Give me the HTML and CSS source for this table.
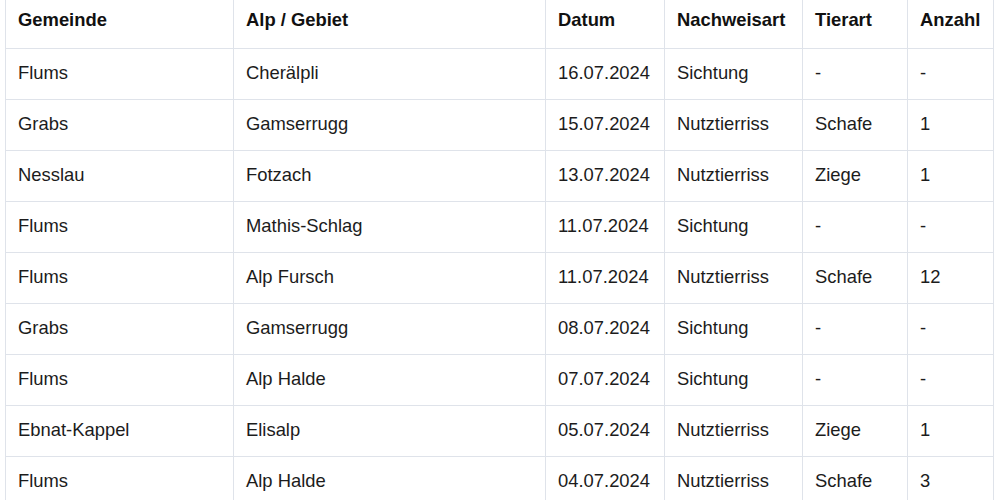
FILE: index.html
```html
<!DOCTYPE html>
<html lang="de">
<head>
<meta charset="utf-8">
<title>Nachweise</title>
<link rel="stylesheet" href="styles.css">
</head>
<body>
<table class="data">
  <colgroup>
    <col class="c1"><col class="c2"><col class="c3"><col class="c4"><col class="c5"><col class="c6">
  </colgroup>
  <thead>
    <tr><th>Gemeinde</th><th>Alp / Gebiet</th><th>Datum</th><th>Nachweisart</th><th>Tierart</th><th>Anzahl</th></tr>
  </thead>
  <tbody>
    <tr><td>Flums</td><td>Cherälpli</td><td>16.07.2024</td><td>Sichtung</td><td>-</td><td>-</td></tr>
    <tr><td>Grabs</td><td>Gamserrugg</td><td>15.07.2024</td><td>Nutztierriss</td><td>Schafe</td><td>1</td></tr>
    <tr><td>Nesslau</td><td>Fotzach</td><td>13.07.2024</td><td>Nutztierriss</td><td>Ziege</td><td>1</td></tr>
    <tr><td>Flums</td><td>Mathis-Schlag</td><td>11.07.2024</td><td>Sichtung</td><td>-</td><td>-</td></tr>
    <tr><td>Flums</td><td>Alp Fursch</td><td>11.07.2024</td><td>Nutztierriss</td><td>Schafe</td><td>12</td></tr>
    <tr><td>Grabs</td><td>Gamserrugg</td><td>08.07.2024</td><td>Sichtung</td><td>-</td><td>-</td></tr>
    <tr><td>Flums</td><td>Alp Halde</td><td>07.07.2024</td><td>Sichtung</td><td>-</td><td>-</td></tr>
    <tr><td>Ebnat-Kappel</td><td>Elisalp</td><td>05.07.2024</td><td>Nutztierriss</td><td>Ziege</td><td>1</td></tr>
    <tr><td>Flums</td><td>Alp Halde</td><td>04.07.2024</td><td>Nutztierriss</td><td>Schafe</td><td>3</td></tr>
  </tbody>
</table>
</body>
</html>
```
FILE: styles.css
```css
html, body {
  margin: 0;
  padding: 0;
  background: #ffffff;
  overflow: hidden;
}
body {
  font-family: "Liberation Sans", Arial, Helvetica, sans-serif;
  font-size: 18.4px;
  color: #1c1c1c;
}
.data {
  border-collapse: collapse;
  table-layout: fixed;
  width: 988px;
  margin: -3px 0 0 5px;
}
.c1 { width: 228px; }
.c2 { width: 312px; }
.c3 { width: 119px; }
.c4 { width: 138px; }
.c5 { width: 105px; }
.c6 { width: 86px; }
.data th,
.data td {
  border: 1px solid #dfe3ea;
  padding: 11px 12px 13px;
  line-height: 26px;
  text-align: left;
  vertical-align: middle;
  white-space: nowrap;
}
.data th {
  padding: 9px 12px 15px;
  font-weight: bold;
  color: #111111;
}
```
